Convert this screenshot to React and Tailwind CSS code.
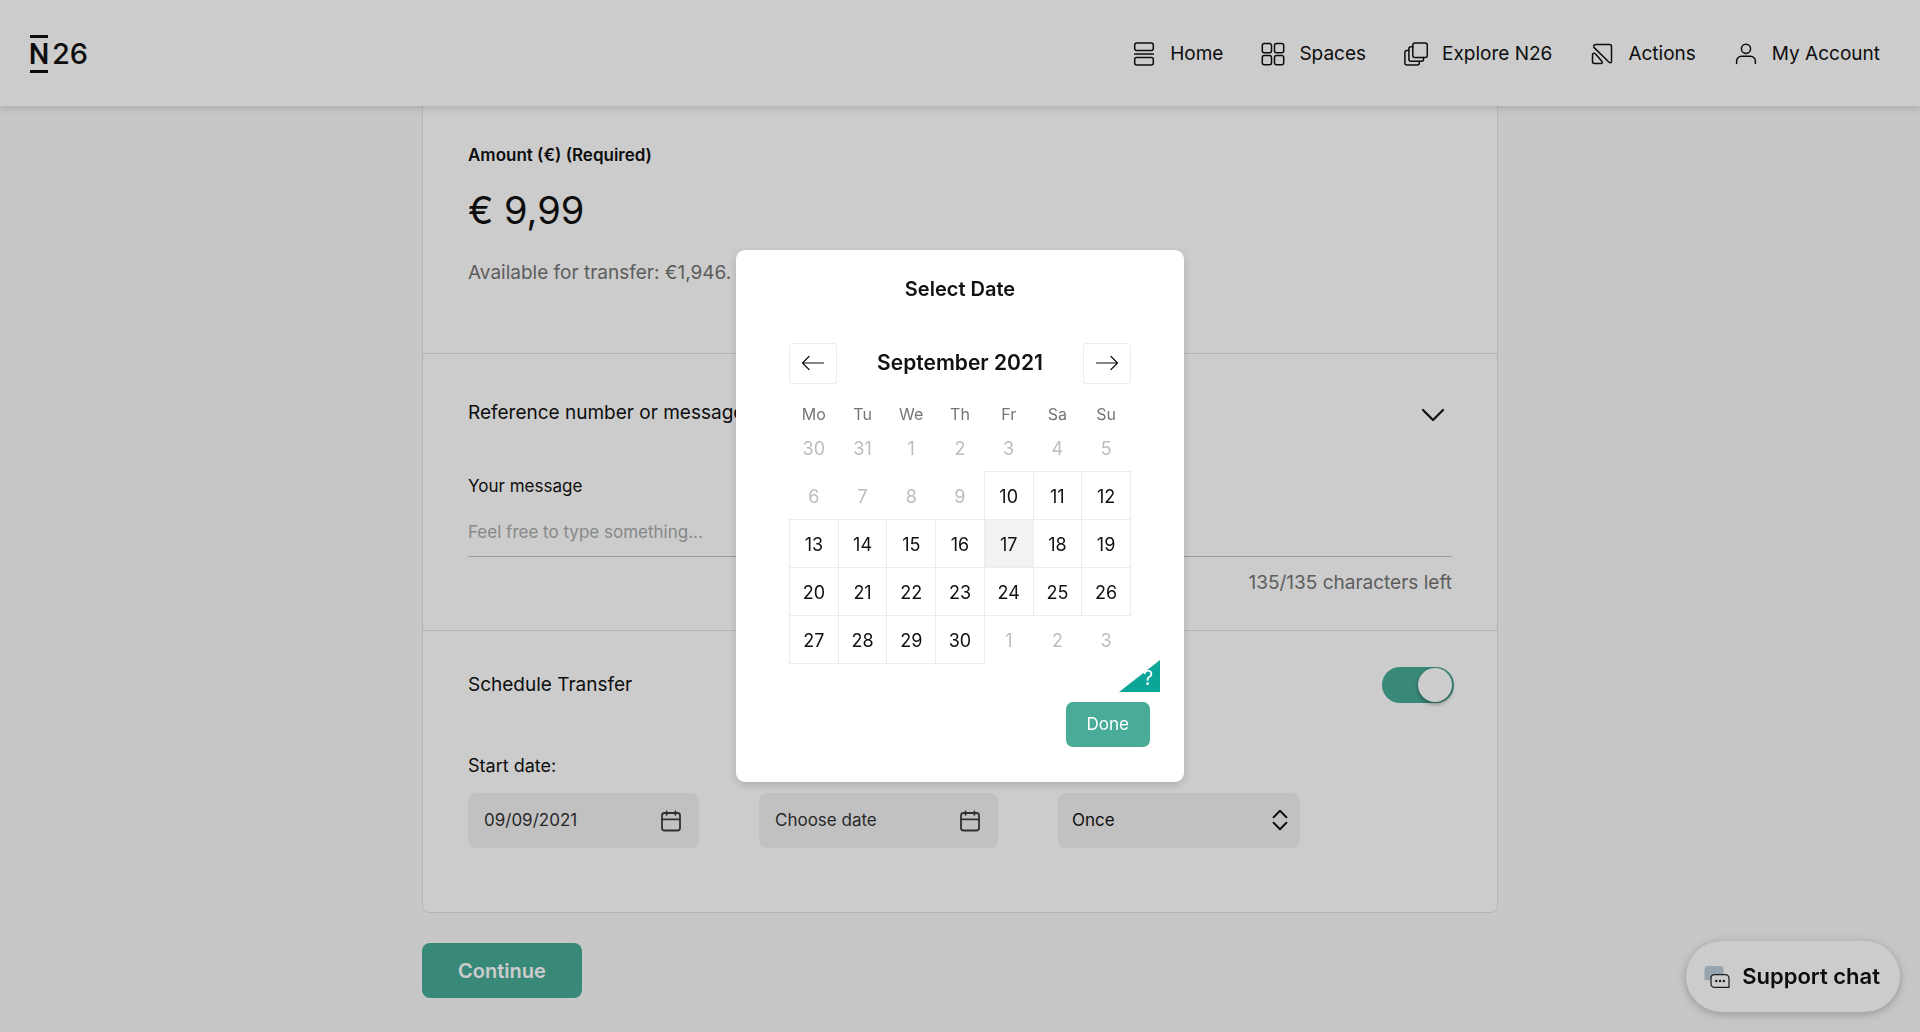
import { useState } from "react";

const navItems = [
    { label: 'Home', icon: HomeIcon },
    { label: 'Spaces', icon: SpacesIcon },
    { label: 'Explore N26', icon: ExploreIcon },
    { label: 'Actions', icon: ActionsIcon },
    { label: 'My Account', icon: AccountIcon },
];

const weekdays = ['Mo', 'Tu', 'We', 'Th', 'Fr', 'Sa', 'Su'];

// off: the day cannot be picked
const weeks = [
    [30, 31, 1, 2, 3, 4, 5].map((day) => ({ day, off: true })),
    [6, 7, 8, 9, 10, 11, 12].map((day) => ({ day, off: day < 10 })),
    [13, 14, 15, 16, 17, 18, 19].map((day) => ({ day, off: false })),
    [20, 21, 22, 23, 24, 25, 26].map((day) => ({ day, off: false })),
    [27, 28, 29, 30, 1, 2, 3].map((day) => ({ day, off: day < 10 })),
];

function NavSvg({ children }) {
    return (
        <svg className="w-6 h-6" viewBox="0 0 24 24" fill="none" stroke="currentColor" strokeWidth="1.5" strokeLinecap="round" strokeLinejoin="round" aria-hidden="true">
            {children}
        </svg>
    );
}

function HomeIcon() {
    return (
        <NavSvg>
            <rect x="2.7" y="1" width="18.6" height="7.4" rx="2" />
            <path d="M2.7 12h18.6" />
            <rect x="2.7" y="15.6" width="18.6" height="7.4" rx="2" />
        </NavSvg>
    );
}

function SpacesIcon() {
    return (
        <NavSvg>
            <rect x="1.3" y="1.6" width="9.2" height="9.2" rx="2" />
            <rect x="13.5" y="1.6" width="9.2" height="9.2" rx="2" />
            <rect x="1.3" y="13.5" width="9.2" height="9.2" rx="2" />
            <rect x="13.5" y="13.5" width="9.2" height="9.2" rx="2" />
        </NavSvg>
    );
}

function ExploreIcon() {
    return (
        <NavSvg>
            <rect x="8.8" y="1" width="14.5" height="14.5" rx="2" />
            <path d="M8.8 4.7H6.9a2 2 0 0 0-2 2v10.6a2 2 0 0 0 2 2h10.6a2 2 0 0 0 2-2v-1.8" />
            <path d="M4.9 8.5H2.9a2 2 0 0 0-2 2v10.4a2 2 0 0 0 2 2h10.4a2 2 0 0 0 2-2v-1.6" />
        </NavSvg>
    );
}

function ActionsIcon() {
    return (
        <NavSvg>
            <path d="M5.5 2.5h14a2 2 0 0 1 2 2v14.7c0 1.7-1.3 2-2.4 1L4.4 5.9C3 4.5 3.6 2.5 5.5 2.5Z" />
            <path d="M2.5 13v6.5a2 2 0 0 0 2 2h6.3c1.7 0 2-1.2 1-2.2L5.6 12C4.2 10.5 2.5 11.2 2.5 13Z" />
        </NavSvg>
    );
}

function AccountIcon() {
    return (
        <NavSvg>
            <circle cx="12" cy="6.8" r="4.6" />
            <path d="M2.6 21.5v-2.2a5 5 0 0 1 5-5h8.8a5 5 0 0 1 5 5v2.2" />
        </NavSvg>
    );
}

function DateField({ id, label, value, placeholder, className }) {
    return (
        <div className={className}>
            {label && <label htmlFor={id} className="mb-[15px] block text-lg leading-6">{label}</label>}
            <div className="flex h-[55px] items-center justify-between rounded-lg bg-[#f2f2f2] px-4">
                <input id={id} type="text" readOnly value={value} placeholder={placeholder} aria-label={label ? undefined : placeholder} className="w-full min-w-0 bg-transparent text-[17px] text-[#333333] outline-none placeholder:text-[#333333]" />
                <button type="button" aria-label="Open calendar">
                    <svg className="w-6 h-6 text-[#3d3d3d]" viewBox="0 0 24 24" fill="none" stroke="currentColor" strokeWidth="1.8" strokeLinecap="round" aria-hidden="true">
                        <rect x="3" y="4" width="18" height="17.5" rx="2.5" />
                        <path d="M3 10.3h18M7.6 2.4v3.4M16.4 2.4v3.4" />
                    </svg>
                </button>
            </div>
        </div>
    );
}

function Header() {
    return (
        <header className="relative z-10 flex h-[106px] items-center justify-between bg-white pt-0.5 pl-[30px] pr-10 shadow-[0_2px_8px_rgba(0,0,0,0.15)]">
            <a href="#" className="flex items-center gap-1 text-[29px] leading-8 font-medium">
                <span className="flex w-[18px] justify-center border-y-[3px] border-[#111111] font-['Roboto',sans-serif]">N</span>
                <span>26</span>
            </a>
            <nav className="flex items-center gap-[38px]">
                {navItems.map(({ label, icon: Icon }) => (
                    <a key={label} href="#" className="flex items-center gap-[14px] text-[19px] leading-7">
                        <Icon />
                        <span>{label}</span>
                    </a>
                ))}
            </nav>
        </header>
    );
}

function TransferForm() {
    const [message, setMessage] = useState('');
    const [scheduled, setScheduled] = useState(true);

    return (
        <form className="mx-auto w-full max-w-[1076px]">
            <div className="rounded-b-lg border border-t-0 border-[#e3e3e3] bg-white">
                <section className="border-b border-[#e3e3e3] px-[45px] pt-[37px] pb-[66px]">
                    <label htmlFor="amount" className="block text-[17px] leading-6 font-semibold">Amount (€) (Required)</label>
                    <input id="amount" type="text" defaultValue="€ 9,99" className="mt-[19px] block h-12 w-full bg-transparent text-[38px] outline-none" />
                    <p className="mt-[25px] text-[19px] leading-7 text-[#757575]">Available for transfer: €1,946.</p>
                </section>
                <section className="border-b border-[#e3e3e3] px-[45px] pt-[45px] pb-[33px]">
                    <div className="flex items-center justify-between">
                        <h2 className="text-[19px] leading-7">Reference number or message</h2>
                        <button type="button" aria-label="Toggle reference" className="mr-[5px]">
                            <svg className="w-7 h-7" viewBox="0 0 28 28" fill="none" stroke="currentColor" strokeWidth="2.2" strokeLinecap="round" strokeLinejoin="round" aria-hidden="true">
                                <path d="M4 11l10 10 10-10" />
                            </svg>
                        </button>
                    </div>
                    <label htmlFor="message" className="mt-[47px] block text-[17px] leading-6">Your message</label>
                    <input id="message" type="text" maxLength={135} value={message} onChange={(e) => setMessage(e.target.value)} placeholder="Feel free to type something..." className="mt-[10px] block h-[49px] w-full border-b border-[#c0c0c0] bg-transparent text-[17px] outline-none placeholder:text-[#ababab]" />
                    <p className="mt-3 text-right text-[19px] leading-7 text-[#757575]">{135 - message.length}/135 characters left</p>
                </section>
                <section className="px-[45px] pt-9 pb-16">
                    <div className="flex h-9 items-center justify-between">
                        <label htmlFor="schedule" className="text-[19px] leading-7">Schedule Transfer</label>
                        <span className="relative -mr-0.5 block h-9 w-[72px] rounded-full bg-[#48ac98]">
                            <input id="schedule" type="checkbox" role="switch" checked={scheduled} onChange={(e) => setScheduled(e.target.checked)} className="peer absolute inset-0 z-10 h-full w-full cursor-pointer opacity-0" />
                            <span className="absolute top-px left-px h-[34px] w-[34px] rounded-full bg-white shadow-[0_2px_4px_rgba(0,0,0,0.4)] peer-checked:left-9"></span>
                        </span>
                    </div>
                    <div className="mt-[51px] flex items-end gap-[60px]">
                        <DateField id="start" label="Start date:" value="09/09/2021" className="w-[231px]" />
                        <DateField id="end" placeholder="Choose date" value="" className="w-[239px]" />
                        <div className="relative w-[242px]">
                            <select aria-label="Frequency" defaultValue="Once" className="block h-[55px] w-full appearance-none rounded-lg bg-[#f2f2f2] pl-[14px] text-[17px] outline-none">
                                <option>Once</option>
                            </select>
                            <svg className="pointer-events-none absolute top-[15px] right-2 w-6 h-6" viewBox="0 0 24 24" fill="none" stroke="currentColor" strokeWidth="2" strokeLinecap="round" strokeLinejoin="round" aria-hidden="true">
                                <path d="M5.6 9.2L12 2.8l6.4 6.4M5.6 14.8l6.4 6.4 6.4-6.4" />
                            </svg>
                        </div>
                    </div>
                </section>
            </div>
            <button type="button" className="mt-[30px] h-[55px] rounded-lg bg-[#48ac98] px-9 text-xl font-semibold text-white">Continue</button>
        </form>
    );
}

function ArrowButton({ label, d }) {
    return (
        <button type="button" aria-label={label} className="flex h-[41px] w-12 items-center justify-center rounded-[3px] border border-[#ececec]">
            <svg className="w-6 h-6" viewBox="0 0 24 24" fill="none" stroke="currentColor" strokeWidth="1.2" strokeLinecap="round" strokeLinejoin="round" aria-hidden="true">
                <path d={d} />
            </svg>
        </button>
    );
}

function DateDialog() {
    const [selected, setSelected] = useState(17);

    return (
        <div className="fixed inset-0 z-30 flex items-center justify-center bg-black/20">
            <div role="dialog" aria-modal="true" aria-labelledby="dialog-title" className="relative w-[448px] rounded-[9px] bg-white px-[53px] pt-[25px] pb-[35px] shadow-[0_3px_8px_rgba(0,0,0,0.15)]">
                <h2 id="dialog-title" className="text-center text-xl font-semibold">Select Date</h2>
                <div className="mt-10 flex items-center justify-between">
                    <ArrowButton label="Previous month" d="M22.5 12h-21M8 5.5L1.5 12L8 18.5" />
                    <h3 className="text-[21px] leading-7 font-semibold">September 2021</h3>
                    <ArrowButton label="Next month" d="M1.5 12h21M16 5.5l6.5 6.5l-6.5 6.5" />
                </div>
                <table className="mt-4 w-full table-fixed border-collapse">
                    <thead>
                        <tr>
                            {weekdays.map((name) => (
                                <th key={name} className="h-6 p-0 pt-1 text-base leading-5 font-normal text-[#757575]">{name}</th>
                            ))}
                        </tr>
                    </thead>
                    <tbody>
                        {weeks.map((week, i) => (
                            <tr key={i} className="h-12">
                                {week.map(({ day, off }) => (
                                    <td key={day} className={off ? 'p-0' : 'border border-[#ececec] p-0'}>
                                        <button
                                            type="button"
                                            disabled={off}
                                            onClick={() => setSelected(day)}
                                            className={off ? 'block h-[47px] w-full pt-0.5 text-lg text-[#bdbdbd]' : day === selected ? 'block h-[47px] w-full bg-[#f2f2f2] pt-0.5 text-lg' : 'block h-[47px] w-full pt-0.5 text-lg'}
                                        >
                                            {day}
                                        </button>
                                    </td>
                                ))}
                            </tr>
                        ))}
                    </tbody>
                </table>
                <a href="#" aria-label="Help" className="absolute right-6 bottom-[90px] h-8 w-[41px] text-white">
                    <svg className="absolute inset-0" width="41" height="32" viewBox="0 0 41 32" aria-hidden="true">
                        <path d="M0 32L41 0V32Z" fill="#0ba698" />
                    </svg>
                    <span className="relative block pt-1 pl-6 text-xl leading-7">?</span>
                </a>
                <div className="-mr-[19px] mt-[38px] flex justify-end">
                    <button type="button" className="h-[45px] rounded-[7px] bg-[#48ac98] px-[21px] text-[17px] text-white">Done</button>
                </div>
            </div>
        </div>
    );
}

export default function App() {
    return (
        <div className="min-h-screen bg-[#f9f9f9] font-['Inter','Liberation_Sans',sans-serif] text-[#111111]">
            <Header />
            <main className="pb-8">
                <TransferForm />
            </main>
            <button type="button" className="fixed right-5 bottom-5 z-20 flex h-[71px] items-center gap-3 rounded-full bg-white pl-[18px] pr-5 text-[22px] font-semibold shadow-[0_2px_10px_rgba(0,0,0,0.25)]">
                <svg width="26" height="24" viewBox="0 0 26 24" fill="none" aria-hidden="true">
                    <path d="M0.5 15V4.5A3.5 3.5 0 0 1 4 1h12a3.5 3.5 0 0 1 3.5 3.5V9h-9A3.5 3.5 0 0 0 7 12.5V15Z" fill="#bccddb" />
                    <path d="M10.5 9.6h11a3.5 3.5 0 0 1 3.5 3.5v9.3H10.5A3.5 3.5 0 0 1 7 18.9v-5.8a3.5 3.5 0 0 1 3.5-3.5Z" stroke="#222222" strokeWidth="1.2" strokeLinejoin="round" />
                    <circle cx="12.3" cy="16" r="1.2" fill="#222222" />
                    <circle cx="16.1" cy="16" r="1.2" fill="#222222" />
                    <circle cx="19.9" cy="16" r="1.2" fill="#222222" />
                </svg>
                <span>Support chat</span>
            </button>
            <DateDialog />
        </div>
    );
}
